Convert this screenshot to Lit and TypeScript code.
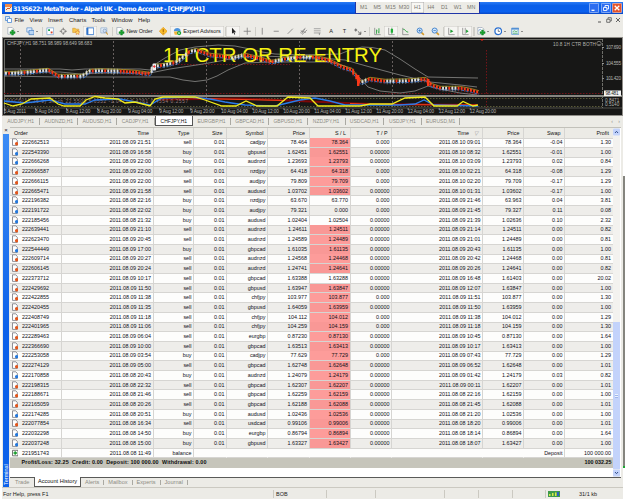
import { LitElement, html, svg, css } from 'lit';
import { customElement } from 'lit/decorators.js';
import { classMap } from 'lit/directives/class-map.js';

type Pt = [number, number];

const MENU: [string, number][] = [
  ['File', 15], ['View', 18.5], ['Insert', 21], ['Charts', 22.5], ['Tools', 20], ['Window', 26.5], ['Help', 20],
];
const FRAMES = ['M1', 'M5', 'M15', 'M30', 'H1', 'H4', 'D1', 'W1', 'MN'];
const TABS = [
  'AUDJPY,H1', 'AUDNZD,H1', 'AUDUSD,H1', 'CADJPY,H1', 'CHFJPY,H1', 'EURGBP,H1',
  'GBPCAD,H1', 'GBPUSD,H1', 'NZDJPY,H1', 'USDCAD,H1', 'USDJPY,H1', 'EURUSD,M1',
];

// order, open day + time, type, symbol, price, s/l, close day + time, close price, swap, profit
const TRADES = `
222662513 09 21:51 sell cadjpy 78.464 78.364 10 09:01 78.364 -0.04 1.30
222543390 09 16:58 buy gbpusd 1.62451 1.62551 10 08:32 1.62551 -0.01 1.00
222666268 09 22:00 buy audnzd 1.23693 1.23793 10 03:09 1.23793 0.02 0.84
222666587 09 22:00 sell nzdjpy 64.418 64.318 10 02:21 64.318 -0.08 1.29
222666115 09 22:00 sell audjpy 79.809 79.709 10 02:20 79.709 -0.17 1.29
222665471 09 21:58 sell audusd 1.03702 1.03602 10 01:31 1.03602 -0.17 1.00
222196382 08 22:16 buy nzdjpy 63.670 63.770 09 21:46 63.963 0.04 3.81
222191722 08 22:02 buy audjpy 79.321 0.000 09 21:45 79.327 0.11 0.08
222185456 08 21:32 buy audusd 1.02404 1.02504 09 21:39 1.02636 0.10 2.32
222639441 09 21:10 sell audnzd 1.24611 1.24511 09 21:14 1.24511 0.00 0.82
222623470 09 20:45 sell audnzd 1.24589 1.24489 09 21:01 1.24489 0.00 0.81
222544449 09 17:00 buy gbpcad 1.61035 1.61135 09 20:43 1.61135 0.00 1.00
222609714 09 20:27 sell audnzd 1.24568 1.24468 09 20:42 1.24468 0.00 0.81
222606145 09 20:24 sell audnzd 1.24741 1.24641 09 20:26 1.24641 0.00 0.82
222373712 09 10:17 sell gbpcad 1.63388 1.63288 09 16:48 1.61403 0.00 20.02
222429692 09 11:50 sell gbpusd 1.63947 1.63847 09 12:07 1.63847 0.00 1.00
222422855 09 11:38 sell chfjpy 103.977 103.877 09 11:51 103.877 0.00 1.30
222420455 09 11:35 sell gbpusd 1.64059 1.63959 09 11:50 1.63959 0.00 1.00
222408749 09 11:18 sell chfjpy 104.112 104.012 09 11:38 104.012 0.00 1.29
222401965 09 11:06 sell chfjpy 104.259 104.159 09 11:18 104.159 0.00 1.30
222289463 09 06:04 sell eurgbp 0.87230 0.87130 09 10:45 0.87130 0.00 1.64
222366690 09 10:00 sell gbpcad 1.63513 1.63413 09 10:17 1.63413 0.00 1.00
222253058 09 03:54 buy cadjpy 77.629 77.729 09 07:43 77.729 0.00 1.29
222274129 09 05:00 sell gbpcad 1.62748 1.62648 09 06:52 1.62648 0.00 1.01
222170858 08 20:43 buy audnzd 1.24079 1.24179 09 01:42 1.24179 0.03 0.82
222198315 08 22:32 sell gbpcad 1.62307 1.62207 09 00:11 1.62207 0.00 1.01
222188671 08 21:46 sell gbpcad 1.62259 1.62159 08 22:16 1.62159 0.00 1.00
222165059 08 20:26 sell gbpcad 1.62188 1.62088 08 21:45 1.62088 0.00 1.01
222174285 08 20:51 buy audusd 1.02436 1.02536 08 21:20 1.02536 0.00 1.00
222077854 08 16:34 sell usdcad 0.99106 0.99006 08 18:20 0.99006 0.00 1.01
222032298 08 14:50 buy eurgbp 0.86794 0.86894 08 18:14 0.86894 0.00 1.64
222037248 08 15:00 buy gbpusd 1.63327 1.63427 08 18:07 1.63427 0.00 1.00
`.trim().split('\n').map((l) => l.split(' '));

// 10x10 toolbar glyphs
const doc = svg`<path d="M1 .5h5l2 2v6H1z" fill="#fff" stroke="#8797a8" stroke-width=".7"/>`;
const plus = svg`<path d="M5.500 3.500h2v2h2v2h-2v2h-2v-2h-2v-2h2z" fill="#19a32c" stroke="#0b7a1c" stroke-width=".5"/>`;
const glass = svg`<path d="M6.300 6.300l3 3" stroke="#d39a2d" stroke-width="1.800"/><circle cx="4.300" cy="4.200" r="3" fill="#cfe6ff" stroke="#3579c4" stroke-width="1"/>`;
const axes = svg`<path d="M2 1v8h7" fill="none" stroke="#777" stroke-width=".8"/>`;
const ICONS: Record<string, unknown> = {
  chart: svg`${doc}${plus}`,
  profiles: svg`<path d="M1 1h6v5H1z" fill="#e6f1ff" stroke="#4b86c9" stroke-width=".8"/><path d="M3.500 4h6v5h-6z" fill="#b9d6f5" stroke="#3a76bd" stroke-width=".8"/>`,
  market: svg`<path d="M1 1h8v8H1z" fill="#fff" stroke="#7fa6d2" stroke-width=".9"/><path d="M2.500 2.500h2.200v2.200H2.500z" fill="#17a04a"/><path d="M5.500 5.300h2.200v2.200H5.500z" fill="#d8442c"/>`,
  data: svg`<circle cx="5" cy="5" r="2.600" fill="none" stroke="#7a7a78" stroke-width=".8"/><path d="M5 .8v3M5 6.200v3M.8 5h3M6.200 5h3" stroke="#666" stroke-width=".9"/>`,
  navigator: svg`<path d="M.8 1.500h3l.8 1h3.400v4H.8z" fill="#f7c64a" stroke="#cf9320" stroke-width=".6"/><path d="M6.500 3.800l.9 1.700 1.900.2-1.400 1.300.4 1.900-1.800-.9-1.700.9.3-1.900-1.300-1.300 1.900-.2z" fill="#ffe06a" stroke="#d0602a" stroke-width=".5"/>`,
  terminal: svg`<path d="M.9 1h8.200v8H.9z" fill="#fff" stroke="#2e73c9" stroke-width="1"/><path d="M1 1h1.800v8H1z" fill="#2e73c9"/>`,
  tester: svg`<path d="M1 1h7v6H1z" fill="#e8f0fa" stroke="#7fa0c8" stroke-width=".7"/><circle cx="5.500" cy="4.500" r="2" fill="#cfe0f5" stroke="#6d88aa" stroke-width=".7"/><path d="M7 6l2.300 3" stroke="#cf9b3c" stroke-width="1.200"/>`,
  order: svg`${doc}${plus}`,
  metaeditor: svg`<path d="M5 .3L9.700 5 5 9.700.3 5z" fill="#fbbf2c" stroke="#d98a10" stroke-width=".6"/><path d="M5 2.500v3.300M5 6.800v1" stroke="#8f4a00" stroke-width="1"/>`,
  advisor: svg`<path d="M1 5c0-5 8-5 8 0z" fill="#4c93dc"/><path d="M1 5.300h6L5 9H2z" fill="#f4b43a"/><circle cx="7.200" cy="7.200" r="2.500" fill="#17a232"/><path d="M6.500 5.900v2.600l2-1.300z" fill="#fff"/>`,
  cursor: svg`<path d="M3.500 1v7l1.700-1.500L6.400 9l.9-.5-1.100-2.300h2.200z" fill="#222"/>`,
  cross: svg`<path d="M5 .8v8.400M.8 5h8.400" stroke="#777" stroke-width=".9"/>`,
  vline: svg`<path d="M5 1v8" stroke="#777" stroke-width=".9"/>`,
  hline: svg`<path d="M2 5h6" stroke="#777" stroke-width=".9"/>`,
  trend: svg`<path d="M2 8l6-6" stroke="#777" stroke-width=".9"/>`,
  channel: svg`<path d="M1.500 7l6-5.500M3.500 9l6-5.500M2 4.500l6 2M3 8l4-6" stroke="#777" stroke-width=".8"/>`,
  fibo: svg`<path d="M1 2h8M1 4.500h8M1 7h8" stroke="#888" stroke-width=".8"/><path d="M7.500 7v2.500" stroke="#888"/>`,
  arrows: svg`<path d="M2 1.500l2 2-2 2-1.800-2z" fill="#777"/><path d="M4.500 5l3.500 3.500M8 5.500v3H5" stroke="#555" stroke-width="1" fill="none"/>`,
  bars: svg`${axes}<path d="M4.200 3v5M7 1.500v6M4.200 4.500h1M6 6h1" stroke="#1a9b2f" stroke-width="1"/>`,
  candles: svg`${axes}<path d="M5.700.8v7.700" stroke="#14862a" stroke-width=".8"/><path d="M4.400 2.300h2.700v4.400H4.400z" fill="#1fae38"/>`,
  line: svg`${axes}<path d="M2.500 2.500c3 0 3 4 6 3.500" fill="none" stroke="#1a9b2f" stroke-width="1"/>`,
  zoomin: svg`${glass}<path d="M4.300 2.800v2.800M2.900 4.200h2.800" stroke="#2467b4" stroke-width=".8"/>`,
  zoomout: svg`${glass}<path d="M2.900 4.200h2.800" stroke="#2467b4" stroke-width=".8"/>`,
  scroll: svg`${axes}<path d="M4 3l3.500 2L4 7z" fill="#1a9b2f"/>`,
  shift: svg`${axes}<path d="M5 1v7" stroke="#777" stroke-width=".8"/><path d="M6 3l3 2-3 2z" fill="#1a9b2f"/>`,
  indicators: svg`${doc}<path d="M2 5c1-3 2-3 3-1" fill="none" stroke="#2d6fc0" stroke-width=".7"/>${plus}`,
  clock: svg`<circle cx="5" cy="5" r="3.900" fill="#fff" stroke="#2a6fd0" stroke-width="1.500"/><path d="M5 2.700V5.200h2" fill="none" stroke="#345" stroke-width=".8"/>`,
  template: svg`<path d="M.8 1.300h8.400v7.400H.8z" fill="#e9f4ff" stroke="#4a8ad0" stroke-width=".8"/><path d="M.8 1.300h8.400v1.700H.8z" fill="#4a8ad0"/><path d="M2 5.500l2-1 2 1 2-1M2 7.300h6" fill="none" stroke="#2ba044" stroke-width=".8"/>`,
};

// icon, slot width, options
const TOOLS: { i?: string; w: number; t?: string; caret?: boolean; on?: boolean; sep?: boolean }[] = [
  { i: 'chart', w: 18, caret: true }, { i: 'profiles', w: 19, caret: true }, { w: 2, sep: true },
  { i: 'market', w: 14 }, { i: 'data', w: 13 }, { i: 'navigator', w: 13 }, { i: 'terminal', w: 14, on: true },
  { i: 'tester', w: 14 }, { w: 2, sep: true }, { i: 'order', w: 43, t: 'New Order' }, { i: 'metaeditor', w: 14 },
  { i: 'advisor', w: 54, t: 'Expert Advisors', on: true }, { w: 2, sep: true },
  { i: 'cursor', w: 14, on: true }, { i: 'cross', w: 14 }, { w: 2, sep: true }, { i: 'vline', w: 13 },
  { i: 'hline', w: 14 }, { i: 'trend', w: 14 }, { i: 'channel', w: 13 }, { i: 'fibo', w: 14 },
  { w: 14, t: 'A' }, { w: 13, t: 'T' }, { i: 'arrows', w: 17, caret: true }, { w: 2, sep: true },
  { i: 'bars', w: 14 }, { i: 'candles', w: 14, on: true }, { i: 'line', w: 14 }, { i: 'zoomin', w: 17 },
  { i: 'zoomout', w: 13 }, { w: 2, sep: true }, { i: 'scroll', w: 14, on: true }, { i: 'shift', w: 14, on: true },
  { w: 3, sep: true }, { i: 'indicators', w: 16, caret: true }, { i: 'clock', w: 17, caret: true },
  { i: 'template', w: 17, caret: true },
];

const UPPER: Pt[] = [[4, 69], [60, 69], [72, 70], [85, 69], [140, 69], [150, 70], [154, 65], [165, 58], [180, 50], [195, 47], [218, 45], [235, 46], [250, 49], [262, 52], [275, 54], [300, 55], [340, 54], [350, 50], [362, 47], [372, 47.5], [385, 50], [400, 59], [415, 69], [428, 77], [478, 78]];
const MIDDLE: Pt[] = [[4, 72], [60, 72], [80, 74], [100, 73], [150, 73], [170, 69], [200, 64.5], [220, 61], [240, 57], [260, 56], [290, 57], [320, 58], [345, 60], [370, 67], [400, 75], [430, 82], [460, 85], [477, 87]];
const LOWER: Pt[] = [[4, 76], [60, 77], [148, 77], [170, 77], [183, 80], [195, 81.5], [207, 80], [217, 76], [228, 70], [245, 63], [270, 62], [330, 62], [345, 66], [358, 76], [368, 87], [380, 91], [400, 93], [415, 91], [428, 86], [440, 89], [460, 93], [477, 95]];
const PRICE: Pt[] = [[4, 73], [15, 73], [30, 72], [48, 70], [53, 73], [58, 76], [84, 76], [90, 71], [100, 70.5], [120, 71], [135, 72], [150, 74], [155, 66], [165, 65], [178, 62], [190, 52], [196, 50], [210, 55], [222, 56], [233, 58], [245, 55], [258, 58], [272, 62], [285, 59], [300, 57], [315, 57], [328, 60], [342, 67], [352, 70], [361, 83], [370, 79], [385, 81], [410, 80.5], [426, 79], [431, 85], [440, 88], [460, 88], [470, 90], [479, 92.5]];
const YELLOW: Pt[] = [[4, 103], [13, 106], [22, 104], [31, 99], [50, 98], [58, 104], [64, 106], [80, 106], [86, 100], [95, 96.5], [105, 98], [118, 99], [125, 103], [135, 102], [150, 106], [155, 99], [163, 97], [195, 97], [205, 100], [222, 106], [236, 106], [246, 101], [257, 106], [277, 106], [288, 97], [310, 98], [318, 106], [360, 106], [370, 104], [392, 104], [405, 98], [425, 97], [434, 106], [457, 106], [463, 101.5], [473, 106], [478, 105]];
const BLUE: Pt[] = [[4, 101], [25, 103], [50, 100], [65, 104], [85, 104], [95, 100], [120, 99], [140, 103], [150, 105], [162, 98], [190, 97], [210, 99], [225, 102], [245, 105], [275, 106], [300, 100], [315, 98], [330, 101], [345, 105], [370, 105], [400, 105], [415, 104], [424, 100], [434, 105], [478, 106]];
const DATES = [
  '5 Aug 2011', '8 Aug 04:00', '8 Aug 12:00', '8 Aug 20:00', '9 Aug 04:00', '9 Aug 12:00', '9 Aug 20:00', '10 Aug 04:00',
  '10 Aug 12:00', '10 Aug 20:00', '11 Aug 04:00', '11 Aug 12:00', '11 Aug 20:00', '12 Aug 04:00', '12 Aug 12:00', '12 Aug 20:00',
];

const yAt = (pts: Pt[], x: number) => {
  const n = Math.max(1, pts.findIndex((p) => p[0] >= x));
  const [a, b] = [pts[n - 1], pts[n]];
  return a[1] + ((b[1] - a[1]) * (x - a[0])) / (b[0] - a[0]);
};
const line = (pts: Pt[], dy = 0) => pts.map(([x, y]) => `${x},${y + dy}`).join(' ');

@customElement('price-chart')
class PriceChart extends LitElement {
  static styles = css`
    :host { display: block; }
    svg { display: block; width: 621px; height: 79px; }
    text { font-family: 'Liberation Sans', sans-serif; font-size: 4.700px; fill: #b4b4b0; }
    .big { font-size: 19.500px; fill: #f6f312; }
    .thin { fill: none; stroke: #8b8b89; stroke-width: 0.8; }
    .grid { stroke: #8a7f7f; stroke-width: 0.7; stroke-dasharray: 2 2; }
    .red { stroke: #7d1418; stroke-width: 0.9; stroke-dasharray: 1.500 1.500; }
  `;

  candles() {
    const out = [];
    for (let x = 5; x < 478; x += 3.1) {
      const y = yAt(PRICE, x);
      const next = yAt(PRICE, Math.min(x + 3, 479));
      const down = next > y + 0.1 || Math.round(x) % 4 === 0;
      const h = Math.max(2.6, Math.abs(next - y) + 1);
      out.push(svg`
        <path d="M${x + 0.9} ${Math.min(y, next) - 2.2}v${h + 3}" stroke=${down ? '#c8321d' : '#cfcfcf'} stroke-width=".5"/>
        <rect x=${x} y=${Math.min(y, next) - 1} width="1.900" height=${h} fill=${down ? '#fb3818' : '#dcdcdc'} />`);
    }
    return out;
  }

  render() {
    return html`<svg viewBox="2 37 621 79">
      <rect x="2" y="37" width="621" height="79" fill="#8f8d88" />
      <rect x="3" y="38" width="619" height="77" fill="#171716" />
      <path d="M4.500 114V39.500h598" fill="none" stroke="#85857f" stroke-width=".8" />
      ${[20.5, 113.5, 206.5, 299.5, 392.5].map((x) => svg`<path class="grid" d="M${x} 41v67" />`)}
      <path class="red" d="M486.500 50v58M160 64.500h130M4 93.500h598" />
      <path d="M602.500 39v69" stroke="#85857f" stroke-width=".8" stroke-dasharray="3 1" />
      <polyline class="thin" points=${line(UPPER)} />
      <polyline class="thin" points=${line(MIDDLE)} />
      <polyline class="thin" points=${line(LOWER)} />
      <polyline points=${line(PRICE, 1.8)} fill="none" stroke="#2d6fd0" stroke-width="1" stroke-dasharray="3 1.500" />
      <text class="big" x="163" y="62" textLength="219" lengthAdjust="spacingAndGlyphs">1H CTR OR RE-ENTRY</text>
      <polyline points=${line(PRICE, -1.7)} fill="none" stroke="#b0a424" stroke-width=".8" />
      ${this.candles()}
      <rect x="357" y="75" width="2.400" height="11" fill="#fb3818" />
      <rect x="427" y="79" width="2.400" height="7" fill="#fb3818" />
      <rect x="152.500" y="63.500" width="3.600" height="7" rx="1" fill="#eee" />
      <path d="M154.300 65v3M153 66.500h2.600" stroke="#e22" stroke-width=".8" />
      <path d="M480 39h4l-2 2z" fill="#f02a1c" />
      <path d="M4 96h618" stroke="#85857f" stroke-width="1.800" />
      <path d="M4 98.500h598M4 106.500h598" stroke="#8a8a52" stroke-width=".6" stroke-dasharray="1.500 1.500" />
      <path d="M160 99.500l80-1 70 3 60 2.500 108 1" fill="none" stroke="#7c0808" stroke-width="2" />
      <path d="M185 97.500l35 1.500 65 1.500M350 103.500l25 1 102 .5" fill="none" stroke="#f5411a" stroke-width="1" />
      <text x="6" y="103" textLength="182" style="fill:#9a7f80">MACD(12,26,9) Stoch 22.5500  5.6552  -1.0471  0.4261  0.4554  0.2557</text>
      <polyline points=${line(BLUE)} fill="none" stroke="#2a7bea" stroke-width="1.300" />
      <polyline points=${line(YELLOW)} fill="none" stroke="#f0ea18" stroke-width="1.300" />
      <path d="M4 108h618" stroke="#77776f" stroke-width=".6" />
      ${DATES.map((d, i) => svg`
        <path d="M${4.5 + i * 31.05} 108v2" stroke="#aaa" stroke-width=".7" />
        <text x=${4 + i * 31.05} y="113" textLength=${d.length * 2.2}>${d}</text>`)}
      <text x="7" y="45" textLength="85">CHFJPY,H1 98.751 98.989 98.649 98.683</text>
      <text x="553" y="45.500" textLength="43">10.8 1H CTR BOTH</text>
      <circle cx="599" cy="43.500" r="2.200" class="thin" />
      <path d="M597.900 44c.6 1 1.600 1 2.200 0" class="thin" />
      <path d="M602 47.500h2M602 63.500h2M602 78.500h2" stroke="#aaa" stroke-width=".8" />
      <text x="606" y="49" textLength="15">107.690</text>
      <text x="606" y="65" textLength="15">104.555</text>
      <text x="606" y="80" textLength="15">101.420</text>
      <rect x="604" y="90.500" width="17" height="5.500" fill="#f2f2f0" />
      <text x="605.500" y="95" textLength="13" style="fill:#222">98.481</text>
      <text x="605" y="101.500">0.8471</text>
      <text x="605" y="106">0.5140</text>
    </svg>`;
  }
}

@customElement('account-history')
class AccountHistory extends LitElement {
  static styles = css`
    :host { display: block; width: 603px; }
    .row {
      display: grid;
      grid-template-columns: 52px 91.500px 40.500px 33px 41px 41.500px 41px 41.500px 91px 41px 41px 48.500px;
      height: 9.710px;
      line-height: 8.900px;
      text-align: right;
      color: #101018;
      background: #fdfdfc;
    }
    .row > span {
      padding-right: 1.500px;
      border-right: 1px solid #d6d5d2;
      border-bottom: 1px solid #d6d5d2;
      box-sizing: border-box;
      white-space: nowrap;
    }
    .row > .order { display: flex; gap: 4px; padding-left: 1.500px; }
    .row > .last { border-right-color: transparent; }
    .alt { background: #eeedea; }
    .hit { background: #fd9c9a; }
    .alt .hit { background: #f99896; }
    .head { height: 10px; line-height: 10px; background: #ecebe6; color: #111; }
    .head > span { padding-right: 3.500px; }
    .head > .order { padding-left: 4px; }
    .head > .sorted { padding-right: 2px; }
    .mark { color: #999; padding: 0 2px 0 5px; }
    svg { width: 6.500px; height: 8px; flex: none; }
    .balance > span { border-right-color: transparent; }
    .balance > .line { border-right-color: #d6d5d2; }
    .sum {
      display: flex;
      justify-content: space-between;
      height: 9.700px;
      padding: 0 1.500px 0 11.500px;
      line-height: 9.500px;
      font-weight: bold;
      background: #c6c5bb;
      color: #0c0c0c;
    }
    .left { letter-spacing: 0.130px; white-space: pre; }
  `;

  icon(color: string) {
    return html`<svg viewBox="0 0 6.5 8">
      <path d="M.5.800h3.300l1.500 1.600v5H.5z" fill="#fff" stroke="#75757c" stroke-width=".8" />
      <circle cx="4.700" cy="5.800" r="1.750" fill=${color} />
    </svg>`;
  }

  row(t: string[], i: number) {
    const [id, d1, t1, type, sym, price, sl, d2, t2, close, swap, profit] = t;
    const tp = /\.\d{3}$/.test(price) ? '0.000' : '0.00000';
    return html`<div class=${classMap({ row: true, alt: i % 2 === 1 })}>
      <span class="order">${this.icon(type === 'sell' ? '#e2561c' : '#2478dc')}${id}</span>
      <span>2011.08.${d1} ${t1}</span><span>${type}</span><span>0.01</span><span>${sym}</span><span>${price}</span>
      <span class=${classMap({ hit: sl === close })}>${sl}</span><span>${tp}</span>
      <span>2011.08.${d2} ${t2}</span><span>${close}</span><span>${swap}</span><span class="last">${profit}</span>
    </div>`;
  }

  render() {
    return html`
      <div class="row head">
        <span class="order">Order</span><span>Time</span><span>Type</span><span>Size</span><span>Symbol</span>
        <span>Price</span><span>S / L</span><span>T / P</span>
        <span class="sorted">Time<i class="mark">▽</i></span><span>Price</span><span>Swap</span><span>Profit</span>
      </div>
      ${TRADES.map((t, i) => this.row(t, i))}
      <div class="row balance">
        <span class="order line"><svg viewBox="0 0 6.5 8">
          <path d="M.5 1.300h5.500v5.500H.5z" fill="#fff" stroke="#555" stroke-width=".8" />
          <path d="M3.200 2.300v3.500M1.500 4h3.500" stroke="#159a28" stroke-width="1.300" /></svg>221951743</span>
        <span class="line">2011.08.08 11:49</span><span class="line">balance</span><span></span><span></span><span></span>
        <span></span><span></span><span></span><span></span><span class="line">Deposit</span><span>100 000.00</span>
      </div>
      <div class="sum">
        <span class="left">Profit/Loss: 32.25  Credit: 0.00  Deposit: 100 000.00  Withdrawal: 0.00</span><span>100 032.25</span>
      </div>
    `;
  }
}

@customElement('app-root')
class AppRoot extends LitElement {
  static styles = css`
    :host {
      display: flex;
      flex-direction: column;
      box-sizing: border-box;
      width: 625px;
      height: 501px;
      padding: 2px;
      overflow: hidden;
      background: #fff;
      color: #1a1a1a;
      font: 5.400px 'Liberation Sans', Arial, sans-serif;
      cursor: default;
    }
    .title {
      display: flex;
      align-items: center;
      height: 12px;
      padding: 0 1px 0 3px;
      background: linear-gradient(#2b7cf5, #0a5fe9 30%, #0a60ee 80%, #0846c4);
      color: #fff;
    }
    .title b { width: 342px; padding-left: 1px; font: bold 6.200px 'DejaVu Sans', sans-serif; white-space: pre; letter-spacing: -0.480px; }
    .logo { width: 7px; height: 8px; }
    .frames {
      display: flex;
      align-self: stretch;
      width: 121px;
      padding: 0 1px;
      border: 1px solid #2036a8;
      border-top: 0;
      background: #ecebe6;
    }
    .frames span { flex: 1; line-height: 11px; text-align: center; color: #77766f; }
    .frames .on { background: #f8f7f4; box-shadow: inset 0 0 0 0.500px #aaa; }
    .win { display: flex; gap: 1.500px; margin-left: auto; }
    .win svg { width: 10px; height: 10px; }
    .menu { display: flex; align-items: center; height: 11.500px; padding-left: 3px; background: #ecebe6; font-size: 5.900px; }
    .menu .doc { width: 7px; height: 7px; margin-right: 2.500px; }
    .mdi { display: flex; gap: 3px; margin-left: auto; padding-right: 2px; }
    .mdi svg { width: 6px; height: 6px; }
    .tools { display: flex; align-items: center; height: 11.500px; padding-left: 2px; background: #ecebe6; font-size: 5.600px; }
    .tool { display: flex; align-items: center; justify-content: center; gap: 1.500px; height: 11px; white-space: nowrap; color: #222; letter-spacing: -0.100px; }
    .tool svg { width: 8.500px; height: 8.500px; flex: none; }
    .tool.on { background: #f6f5f2; box-shadow: inset 0 0 0 0.500px #c9c8c2; }
    .sep { height: 9px; background: #cfcec8; background-clip: content-box; padding: 0 0.500px; box-sizing: border-box; }
    .caret { border: 1.500px solid transparent; border-top-color: #333; border-bottom: 0; }
    .tabs { display: flex; height: 11px; background: #ecebe6; color: #8c8b84; font-size: 5px; }
    .tabs span { box-sizing: border-box; width: 38.200px; height: 7px; margin-top: 2px; line-height: 7px; text-align: center; border-right: 1px solid #aaa9a2; }
    .tabs .on { height: 10px; margin-top: 0; line-height: 10px; background: #fff; color: #111; border: 1px solid #555; border-top: 0; }
    .tabs i { margin-left: auto; font-style: normal; padding-right: 3px; word-spacing: 4px; line-height: 10px; }
    .terminal { display: flex; height: 360px; background: #ecebe6; }
    .side { display: flex; flex-direction: column; align-items: center; width: 6px; margin: 0 1px; font-size: 6px; line-height: 7px; }
    .side div { flex: 1; display: flex; align-items: flex-start; width: 6px; writing-mode: vertical-rl; transform: rotate(180deg); background: linear-gradient(to top, #3c8cf5, #0e62ea 55%); color: #fff; font-size: 5.500px; line-height: 6px; padding-top: 2px; box-sizing: border-box; }
    .main { width: 611px; }
    .view { display: flex; height: 351px; box-sizing: border-box; border-top: 1px solid #c2c1ba; border-bottom: 1px solid #5a5a58; background: #fff; }
    .bar { display: flex; flex-direction: column; width: 7px; background: #f3f2ef; }
    .bar svg { width: 7px; height: 8px; }
    .thumb { height: 147px; margin-top: auto; background: #c3d3fb; display: grid; place-items: center; }
    .grip { width: 3px; height: 4px; background: repeating-linear-gradient(#eef4fe 0 1px, #9db4ea 1px 2px); }
    .edge { width: 2px; margin-top: 49px; height: 290px; background: #85857f; margin-left: auto; margin-right: -2px; border-bottom: 2px solid #19a832; }
    .views { display: flex; height: 9px; line-height: 9px; color: #8c8b84; font-size: 5.600px; }
    .views span { padding-right: 5px; margin-right: 4px; }
    .views .div { background: linear-gradient(#aaa9a2, #aaa9a2) right center / 1px 5px no-repeat; }
    .views .on { width: 47px; box-sizing: border-box; padding: 0; margin-right: 4px; margin-top: -1px; text-align: center; background: #fff; color: #111; border: 1px solid #5a5a58; border-top: 0; }
    .status { display: flex; align-items: center; height: 11px; background: #ecebe6; border-top: 1px solid #cbc9c1; font-size: 5.500px; }
    .status span { box-sizing: border-box; height: 8px; line-height: 8px; border-right: 1px solid #cbc9c1; padding-left: 2px; }
    .status svg { width: 12px; height: 6px; margin: 0 19px 0 2px; }
  `;

  glyph(name: string) {
    return html`<svg viewBox="0 0 10 10">${ICONS[name]}</svg>`;
  }

  render() {
    return html`
      <div class="title">
        <svg class="logo" viewBox="0 0 7 8"><path d="M0 0h7v8H0z" fill="#f6ead8" /><path d="M0 0h7v3H0z" fill="#f0894a" /><path d="M1 6l2-2 1 1 2-2" fill="none" stroke="#d8542a" /></svg>
        <b>3135622: MetaTrader - Alpari UK - Demo Account - [CHFJPY,H1]</b>
        <div class="frames">${FRAMES.map((f) => html`<span class=${classMap({ on: f === 'H1' })}>${f}</span>`)}</div>
        <div class="win">
          <svg viewBox="0 0 10 10"><rect x=".3" y=".3" width="9.400" height="9.400" rx="1.200" fill="#2d6df0" stroke="#c9dafc" stroke-width=".7" /><path d="M2.500 7.300h3" stroke="#fff" stroke-width="1.300" /></svg>
          <svg viewBox="0 0 10 10"><rect x=".3" y=".3" width="9.400" height="9.400" rx="1.200" fill="#2d6df0" stroke="#c9dafc" stroke-width=".7" /><path d="M4 4V2.500h3.500V6H6M2.500 4.500h3.300v3H2.500z" fill="none" stroke="#fff" stroke-width=".9" /></svg>
          <svg viewBox="0 0 10 10"><rect x=".3" y=".3" width="9.400" height="9.400" rx="1.200" fill="#e4532c" stroke="#f7d6cc" stroke-width=".7" /><path d="M2.700 2.700l4.600 4.600M7.300 2.700L2.700 7.300" stroke="#fff" stroke-width="1.300" /></svg>
        </div>
      </div>
      <div class="menu">
        <svg class="doc" viewBox="0 0 7 7"><path d="M.5.500h4v4h-4z" fill="#dbe9fb" stroke="#4f8ad2" stroke-width=".8" /><path d="M2.500 2.500h4v4h-4z" fill="#fff" stroke="#4f8ad2" stroke-width=".8" /></svg>
        ${MENU.map(([m, w]) => html`<span style="width:${w}px">${m}</span>`)}
        <div class="mdi">
          <svg viewBox="0 0 6 6"><path d="M1 5h3" stroke="#555" /></svg>
          <svg viewBox="0 0 6 6"><path d="M2 2V.700h3.300V4H4M.7 2.300h3.300v3H.7z" fill="none" stroke="#555" stroke-width=".8" /></svg>
          <svg viewBox="0 0 6 6"><path d="M1 1l4 4M5 1L1 5" stroke="#555" stroke-width=".9" /></svg>
        </div>
      </div>
      <div class="tools">
        ${TOOLS.map((t) => html`<div class=${classMap({ tool: !t.sep, sep: !!t.sep, on: !!t.on })} style="width:${t.w}px">
          ${t.i ? this.glyph(t.i) : ''}${t.t ?? ''}${t.caret ? html`<i class="caret"></i>` : ''}</div>`)}
      </div>
      <price-chart></price-chart>
      <div class="tabs">${TABS.map((t, i) => html`<span class=${classMap({ on: i === 4 })}>${t}</span>`)}<i>‹ ›</i></div>
      <div class="terminal">
        <div class="side">×<div>Terminal</div></div>
        <div class="main">
          <div class="view">
            <account-history></account-history>
            <div class="bar">
              <svg viewBox="0 0 7 8"><rect y=".5" width="7" height="7" rx="1" fill="#c3d3fb" /><path d="M2 5l1.500-1.700L5 5" fill="none" stroke="#34508c" /></svg>
              <div class="thumb"><div class="grip"></div></div>
              <svg viewBox="0 0 7 8"><rect y=".5" width="7" height="7" rx="1" fill="#c3d3fb" /><path d="M2 3l1.500 1.700L5 3" fill="none" stroke="#34508c" /></svg>
            </div>
          </div>
          <div class="views">
            <span style="width:14px;padding:0 2px 0 5px;margin-right:3px">Trade</span><span class="on">Account History</span>
            <span class="div">Alerts</span><span class="div">Mailbox</span><span class="div">Experts</span><span class="div">Journal</span>
          </div>
        </div>
        <div class="edge"></div>
      </div>
      <div class="status">
        <span style="width:272px;padding-left:1px">For Help, press F1</span><span style="width:53px">BOB</span>
        <span style="width:49px"></span><span style="width:69px"></span><span style="width:34px"></span><span style="width:34px"></span><span style="width:33px"></span>
        <svg viewBox="0 0 12 6"><path d="M0 0h12v6H0z" fill="#3f9a4a" /><path d="M1 5V3h1.500v2M4 5V2h1.500v3M7 5V1.500h1.500V5" fill="#d9e84a" /><path d="M9 1h2v4H9z" fill="#2b5fc0" /></svg>
        31/1 kb
      </div>
    `;
  }
}
